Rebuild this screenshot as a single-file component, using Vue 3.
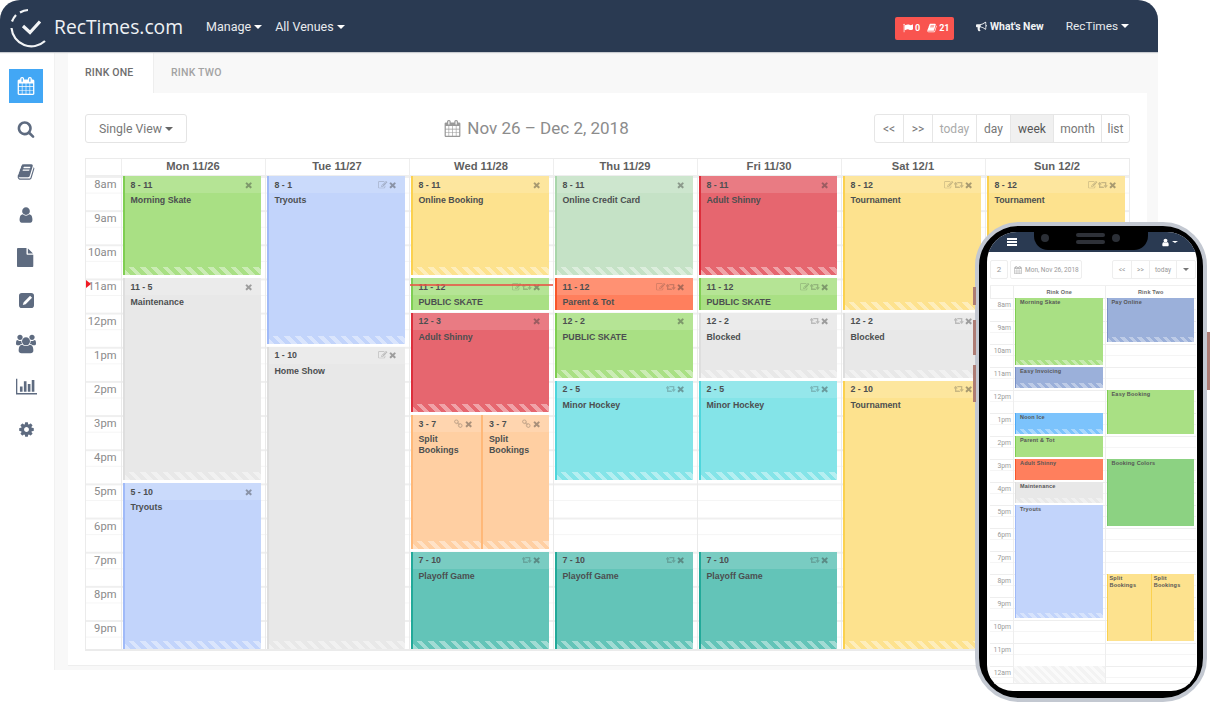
<template>
  <div class="page">
    <div class="window">
      <header class="topbar">
        <svg class="logo" width="50" height="50" viewBox="0 0 50 50">
          <path d="M11.5 27 A20 20 0 0 0 45 40" class="logo-arc" />
          <path d="M12 20.5 A20 20 0 0 1 16 14" class="logo-arc" />
          <path d="M20 11.5 A18 18 0 0 1 28 9" class="logo-arc" />
          <path d="M23 25 L30 31.5 L40 20.5" class="logo-check" />
        </svg>
        <span class="brand">RecTimes.com</span>
        <nav class="nav">
          <a>Manage<i class="caret"></i></a>
          <a>All Venues<i class="caret"></i></a>
        </nav>
        <div class="topright">
          <div class="alerts">
            <svg width="10" height="10" viewBox="0 0 1792 1792"><path :d="icons.flag" /></svg><span>0</span>
            <svg class="alert2" width="10" height="10" viewBox="0 0 1792 1792"><path :d="icons.book" /></svg><span>21</span>
          </div>
          <a class="news">
            <svg width="11" height="11" viewBox="0 0 1792 1792"><path :d="icons.bullhorn" /></svg>What's New
          </a>
          <a class="account">RecTimes<i class="caret"></i></a>
        </div>
      </header>

      <div class="main">
        <aside class="sidebar">
          <div v-for="(s, n) in sideIcons" :key="n" class="side-item" :class="{ active: n === 0 }">
            <svg :width="s.w" :height="s.w" :viewBox="s.box"><path :d="s.d" /></svg>
          </div>
        </aside>

        <section class="content">
          <div class="tabs">
            <div class="tab on">RINK ONE</div>
            <div class="tab">RINK TWO</div>
          </div>
          <div class="panel">
            <div class="toolbar">
              <button class="view-btn">Single View<i class="caret dark"></i></button>
              <h2 class="range">
                <svg width="17" height="17" viewBox="0 0 1792 1792"><path :d="icons.calendar" /></svg>
                Nov 26 – Dec 2, 2018
              </h2>
              <div class="btn-group">
                <span v-for="b in viewBtns" :key="b" :class="{ cur: b === 'week', off: b === 'today' }">{{ b }}</span>
              </div>
            </div>

            <div class="calendar">
              <div class="cal-head">
                <div class="cal-gutter"></div>
                <div v-for="d in days" :key="d.label" class="cal-day">{{ d.label }}</div>
              </div>
              <div class="cal-body">
                <div class="time-col">
                  <i class="now-arrow"></i>
                  <div v-for="t in hours" :key="t" class="time">{{ t }}</div>
                </div>
                <div v-for="(d, n) in days" :key="d.label" class="day">
                  <i v-if="n === 2" class="now-line"></i>
                  <div
                    v-for="(e, k) in d.events"
                    :key="k"
                    class="event"
                    :class="[e.c, e.side, { striped: e.e - e.s > 1 }]"
                    :style="{ gridRow: `${e.s - 7} / ${e.e - 7}` }"
                  >
                    <div class="event-head">
                      <span>{{ e.time }}</span>
                      <span class="event-icons">
                        <svg v-for="ic in e.i" :key="ic" :class="'ic-' + ic" width="10" height="10" viewBox="0 0 1920 1792"><path :d="icons[ic]" /></svg>
                      </span>
                    </div>
                    <div class="event-title">{{ e.title }}</div>
                  </div>
                </div>
              </div>
            </div>
          </div>
        </section>
      </div>
    </div>

    <div class="phone">
      <i class="side-btn l1"></i><i class="side-btn l2"></i><i class="side-btn l3"></i><i class="side-btn r1"></i>
      <div class="notch">
        <i class="cam"></i>
        <div class="speaker"><i></i><i></i></div>
        <i class="cam"></i>
      </div>
      <div class="screen">
        <div class="p-bar">
          <div class="burger"><i></i><i></i><i></i></div>
          <div class="p-user">
            <svg width="9" height="9" viewBox="0 0 1792 1792"><path :d="icons.user" /></svg><i class="caret small"></i>
          </div>
        </div>
        <div class="p-tools">
          <span class="p-box num">2</span>
          <span class="p-box date">
            <svg width="8" height="8" viewBox="0 0 1792 1792"><path :d="icons.calendar" /></svg>Mon, Nov 26, 2018
          </span>
          <div class="p-group">
            <span>&lt;&lt;</span><span>&gt;&gt;</span><span>today</span><span><i class="caret small grey"></i></span>
          </div>
        </div>
        <div class="p-cal">
          <div class="p-head">
            <div></div>
            <div>Rink One</div>
            <div>Rink Two</div>
          </div>
          <div class="p-body">
            <div class="p-times">
              <div v-for="t in phoneHours" :key="t">{{ t }}</div>
            </div>
            <div v-for="(col, n) in phoneCols" :key="n" class="p-col">
              <div
                v-for="(e, k) in col"
                :key="k"
                class="p-event"
                :class="[e.c, e.side, { striped: e.stripe }]"
                :style="{ gridRow: `${e.s - 7} / ${e.e - 7}` }"
              >
                {{ e.title }}
              </div>
              <div v-if="n === 0" class="p-closed"></div>
            </div>
          </div>
        </div>
      </div>
    </div>
  </div>
</template>

<script setup>
const icons = {
  times: "M1490 1322q0 40-28 68l-136 136q-28 28-68 28t-68-28l-294-294-294 294q-28 28-68 28t-68-28l-136-136q-28-28-28-68t28-68l294-294-294-294q-28-28-28-68t28-68l136-136q28-28 68-28t68 28l294 294 294-294q28-28 68-28t68 28l136 136q28 28 28 68t-28 68l-294 294 294 294q28 28 28 68z",
  edit: "M888 1184l116-116-152-152-116 116v56h96v96h56zm440-720q-16-16-33 1l-350 350q-17 17-1 33t33-1l350-350q17-17 1-33zm80 594v190q0 119-84.5 203.5t-203.5 84.5h-832q-119 0-203.5-84.5t-84.5-203.5v-832q0-119 84.5-203.5t203.5-84.5h832q63 0 117 25 15 7 18 23 3 17-9 29l-49 49q-14 14-32 8-23-6-45-6h-832q-66 0-113 47t-47 113v832q0 66 47 113t113 47h832q66 0 113-47t47-113v-126q0-13 9-22l64-64q15-15 35-7t20 29zm-96-738l288 288-672 672h-288v-288zm444 132l-92 92-288-288 92-92q28-28 68-28t68 28l152 152q28 28 28 68t-28 68z",
  retweet: "M1216 1424q0 13-9.5 22.5t-22.5 9.5h-960q-8 0-13.5-2t-9-7-5.5-8-3-11.5-1-11.5v-600h-192q-26 0-45-19t-19-45q0-24 15-41l320-384q19-22 49-22t49 22l320 384q15 17 15 41 0 26-19 45t-45 19h-192v384h576q16 0 25 11l160 192q7 10 7 21zm640-416q0 24-15 41l-320 384q-20 23-49 23t-49-23l-320-384q-15-17-15-41 0-26 19-45t45-19h192v-384h-576q-16 0-25-12l-160-192q-7-9-7-20 0-13 9.5-22.5t22.5-9.5h960q8 0 13.5 2t9 7 5.5 8 3 11.5 1 11.5v600h192q26 0 45 19t19 45z",
  link: "M1456 1216q0-40-28-68l-208-208q-28-28-68-28-42 0-72 32 3 3 19 18.5t21.5 21.5 15 19 13 25.5 3.5 27.5q0 40-28 68t-68 28q-15 0-27.5-3.5t-25.5-13-19-15-21.5-21.5-18.5-19q-33 31-33 73 0 40 28 68l206 207q27 27 68 27 40 0 68-26l147-146q28-28 28-67zm-703-705q0-40-28-68l-206-207q-28-28-68-28-39 0-68 27l-147 146q-28 28-28 67 0 40 28 68l208 208q27 27 68 27 42 0 72-31-3-3-19-18.5t-21.5-21.5-15-19-13-25.5-3.5-27.5q0-40 28-68t68-28q15 0 27.5 3.5t25.5 13 19 15 21.5 21.5 18.5 19q33-31 33-73zm895 705q0 120-85 203l-147 146q-83 83-203 83-121 0-204-85l-206-207q-83-83-83-203 0-123 88-209l-88-88q-86 88-208 88-120 0-204-84l-208-208q-84-84-84-204t85-203l147-146q83-83 203-83 121 0 204 85l206 207q83 83 83 203 0 123-88 209l88 88q86-88 208-88 120 0 204 84l208 208q84 84 84 204z",
  calendar: "M192 1664h288v-288h-288v288zm352 0h320v-288h-320v288zm-352-352h288v-320h-288v320zm352 0h320v-320h-320v320zm-352-384h288v-288h-288v288zm736 736h320v-288h-320v288zm-384-736h320v-288h-320v288zm768 736h288v-288h-288v288zm-384-352h320v-320h-320v320zm-352-864v-288q0-13-9.5-22.5t-22.5-9.5h-64q-13 0-22.5 9.5t-9.5 22.5v288q0 13 9.5 22.5t22.5 9.5h64q13 0 22.5-9.5t9.5-22.5zm736 864h288v-320h-288v320zm-384-384h320v-288h-320v288zm384 0h288v-288h-288v288zm32-480v-288q0-13-9.5-22.5t-22.5-9.5h-64q-13 0-22.5 9.5t-9.5 22.5v288q0 13 9.5 22.5t22.5 9.5h64q13 0 22.5-9.5t9.5-22.5zm384-64v1280q0 52-38 90t-90 38h-1408q-52 0-90-38t-38-90v-1280q0-52 38-90t90-38h128v-96q0-66 47-113t113-47h64q66 0 113 47t47 113v96h384v-96q0-66 47-113t113-47h64q66 0 113 47t47 113v96h128q52 0 90 38t38 90z",
  book: "M1703 478q40 57 18 129l-275 906q-19 64-76.5 107.5t-122.5 43.5h-923q-77 0-148.5-53.5t-99.5-131.5q-24-67-2-127 0-4 3-27t4-37q1-8-3-21.5t-3-19.5q2-11 8-21t16.5-23.5 16.5-23.5q23-38 45-91.5t30-91.5q3-10 .5-30t-.5-28q3-11 17-28t17-23q21-36 42-92t25-90q1-9-2.5-32t.5-28q4-13 22-30.5t22-22.5q19-26 42.5-84.5t27.5-96.5q1-8-3-25.5t-2-26.5q2-8 9-18t18-23 17-21q8-12 16.5-30.5t15-35 16-36 19.5-32 26.5-23.5 36-11.5 47.5 5.5l-1 3q38-9 51-9h761q74 0 114 56t18 130l-274 906q-36 119-71.5 153.5t-128.5 34.5h-869q-27 0-38 15-11 16-1 43 24 70 144 70h923q29 0 56-15.5t35-41.5l300-987q7-22 5-57 38 15 59 43zm-1064 2q-4 13 2 22.5t20 9.5h608q13 0 25.5-9.5t16.5-22.5l21-64q4-13-2-22.5t-20-9.5h-608q-13 0-25.5 9.5t-16.5 22.5zm-83 256q-4 13 2 22.5t20 9.5h608q13 0 25.5-9.5t16.5-22.5l21-64q4-13-2-22.5t-20-9.5h-608q-13 0-25.5 9.5t-16.5 22.5z",
  user: "M1536 1399q0 109-62.5 187t-150.5 78h-854q-88 0-150.5-78t-62.5-187q0-85 8.5-160.5t31.5-152 58.5-131 94-89 134.5-34.5q131 128 313 128t313-128q76 0 134.5 34.5t94 89 58.5 131 31.5 152 8.5 160.5zm-256-887q0 159-112.5 271.5t-271.5 112.5-271.5-112.5-112.5-271.5 112.5-271.5 271.5-112.5 271.5 112.5 112.5 271.5z",
  flag: "M320 256q0 72-64 110v1266q0 13-9.5 22.5t-22.5 9.5h-64q-13 0-22.5-9.5t-9.5-22.5v-1266q-64-38-64-110 0-53 37.5-90.5t90.5-37.5 90.5 37.5 37.5 90.5zm1472 64v763q0 25-12.5 38.5t-39.5 27.5q-215 116-369 116-61 0-123.5-22t-108.5-48-115.5-48-142.5-22q-192 0-464 146-17 9-33 9-26 0-45-19t-19-45v-742q0-32 31-55 21-14 79-43 236-120 421-120 107 0 200 29t219 88q38 19 88 19 54 0 117.5-21t110-47 88-47 54.5-21q26 0 45 19t19 45z",
  bullhorn: "M1664 640q53 0 90.5 37.5t37.5 90.5-37.5 90.5-90.5 37.5v384q0 52-38 90t-90 38q-417-347-812-380-58 19-91 66t-31 100.5 40 92.5q-20 33-23 65.5t6 58 33.5 55 48 50 61.5 50.5q-29 58-111.5 83t-168.5 11.5-132-55.5q-7-23-29.5-87.5t-32-94.5-23-89-15-101 3.5-98.5 22-110.5h-122q-66 0-113-47t-47-113v-192q0-66 47-113t113-47h480q435 0 896-384 52 0 90 38t38 90v384zm-128 604v-954q-394 302-768 343v270q377 42 768 341z",
};

const box = "0 0 1792 1792";
const sideIcons = [
  { w: 18, box, d: icons.calendar },
  { w: 18, box, d: "M1216 832q0-185-131.5-316.5t-316.5-131.5-316.5 131.5-131.5 316.5 131.5 316.5 316.5 131.5 316.5-131.5 131.5-316.5zm512 832q0 52-38 90t-90 38q-54 0-90-38l-343-342q-179 124-399 124-143 0-273.5-55.5t-225-150-150-225-55.5-273.5 55.5-273.5 150-225 225-150 273.5-55.5 273.5 55.5 225 150 150 225 55.5 273.5q0 220-124 399l343 343q37 37 37 90z" },
  { w: 18, box, d: icons.book },
  { w: 18, box, d: icons.user },
  { w: 19, box, d: "M1024 512v-472q22 14 36 28l408 408q14 14 28 36h-472zm-128 32q0 40 28 68t68 28h544v1056q0 40-28 68t-68 28h-1344q-40 0-68-28t-28-68v-1600q0-40 28-68t68-28h800v544z" },
  { w: 15, box: "0 0 16 16", d: "M3 0h10a3 3 0 0 1 3 3v10a3 3 0 0 1-3 3H3a3 3 0 0 1-3-3V3a3 3 0 0 1 3-3zm8.8 3L5 9.8 4 12.9l3.1-1L13.9 5.1z" },
  { w: 20, box: "0 0 1920 1792", d: "M593 896q-162 5-265 128h-134q-82 0-138-40.5t-56-118.5q0-353 124-353 6 0 43.5 21t97.5 42.5 119 21.5q67 0 133-23-5 37-5 66 0 139 81 256zm1071 637q0 120-73 189.5t-194 69.5h-874q-121 0-194-69.5t-73-189.5q0-53 3.5-103.5t14-109 26.5-108.5 43-97.5 62-81 85.5-53.5 111.5-20q10 0 43 21.5t73 48 107 48 135 21.5 135-21.5 107-48 73-48 43-21.5q61 0 111.5 20t85.5 53.5 62 81 43 97.5 26.5 108.5 14 109 3.5 103.5zm-1024-1277q0 106-75 181t-181 75-181-75-75-181 75-181 181-75 181 75 75 181zm704 384q0 159-112.5 271.5t-271.5 112.5-271.5-112.5-112.5-271.5 112.5-271.5 271.5-112.5 271.5 112.5 112.5 271.5zm576 225q0 78-56 118.5t-138 40.5h-134q-103-123-265-128 81-117 81-256 0-29-5-66 66 23 133 23 59 0 119-21.5t97.5-42.5 43.5-21q124 0 124 353zm-128-609q0 106-75 181t-181 75-181-75-75-181 75-181 181-75 181 75 75 181z" },
  { w: 21, box: "0 0 2048 1792", d: "M640 896v512h-256v-512h256zm384-512v1024h-256v-1024h256zm1024 1152v128h-2048v-1536h128v1408h1920zm-640-896v768h-256v-768h256zm384-384v1152h-256v-1152h256z" },
  { w: 17, box, d: "M1152 896q0-106-75-181t-181-75-181 75-75 181 75 181 181 75 181-75 75-181zm512-109v222q0 12-8 23t-20 13l-185 28q-19 54-39 91 35 50 107 138 10 12 10 25t-9 23q-27 37-99 108t-94 71q-12 0-26-9l-138-108q-44 23-91 38-16 136-29 186-7 28-36 28h-222q-14 0-24.5-8.5t-11.5-21.5l-28-184q-49-16-90-37l-141 107q-10 9-25 9-14 0-25-11-126-114-165-168-7-10-7-23 0-12 8-23 15-21 51-66.5t54-70.5q-27-50-41-99l-183-27q-13-2-21-12.5t-8-23.5v-222q0-12 8-23t19-13l186-28q14-46 39-92-40-57-107-138-10-12-10-24 0-10 9-23 26-36 98.5-107.5t94.5-71.5q13 0 26 10l138 107q44-23 91-38 16-136 29-186 7-28 36-28h222q14 0 24.5 8.5t11.5 21.5l28 184q49 16 90 37l142-107q9-9 24-9 13 0 25 10 129 119 165 170 7 8 7 22 0 12-8 23-15 21-51 66.5t-54 70.5q26 50 41 98l183 28q13 2 21 12.5t8 23.5z" },
];

const viewBtns = ["<<", ">>", "today", "day", "week", "month", "list"];
const hours = ["8am", "9am", "10am", "11am", "12pm", "1pm", "2pm", "3pm", "4pm", "5pm", "6pm", "7pm", "8pm", "9pm"];
const phoneHours = [...hours, "10pm", "11pm", "12am"];

const x = ["times"];
const ex = ["edit", "times"];
const rx = ["retweet", "times"];
const erx = ["edit", "retweet", "times"];
const lx = ["link", "times"];

const playoff = { s: 19, e: 22, c: "teal", time: "7 - 10", title: "Playoff Game", i: rx };
const hockey = { s: 14, e: 17, c: "cyan", time: "2 - 5", title: "Minor Hockey", i: rx };
const skate = { s: 11, e: 12, c: "green", time: "11 - 12", title: "PUBLIC SKATE", i: erx };
const tournament = { s: 8, e: 12, c: "yellow", time: "8 - 12", title: "Tournament", i: erx };

const days = [
  {
    label: "Mon 11/26",
    events: [
      { s: 8, e: 11, c: "green", time: "8 - 11", title: "Morning Skate", i: x },
      { s: 11, e: 17, c: "grey", time: "11 - 5", title: "Maintenance", i: x },
      { s: 17, e: 22, c: "blue", time: "5 - 10", title: "Tryouts", i: x },
    ],
  },
  {
    label: "Tue 11/27",
    events: [
      { s: 8, e: 13, c: "blue", time: "8 - 1", title: "Tryouts", i: ex },
      { s: 13, e: 22, c: "grey", time: "1 - 10", title: "Home Show", i: ex },
    ],
  },
  {
    label: "Wed 11/28",
    events: [
      { s: 8, e: 11, c: "yellow", time: "8 - 11", title: "Online Booking", i: x },
      skate,
      { s: 12, e: 15, c: "red", time: "12 - 3", title: "Adult Shinny", i: x },
      { s: 15, e: 19, c: "peach", side: "left", time: "3 - 7", title: "Split Bookings", i: lx },
      { s: 15, e: 19, c: "peach", side: "right", time: "3 - 7", title: "Split Bookings", i: lx },
      playoff,
    ],
  },
  {
    label: "Thu 11/29",
    events: [
      { s: 8, e: 11, c: "sage", time: "8 - 11", title: "Online Credit Card", i: x },
      { s: 11, e: 12, c: "coral", time: "11 - 12", title: "Parent & Tot", i: erx },
      { s: 12, e: 14, c: "green", time: "12 - 2", title: "PUBLIC SKATE", i: x },
      hockey,
      playoff,
    ],
  },
  {
    label: "Fri 11/30",
    events: [
      { s: 8, e: 11, c: "red", time: "8 - 11", title: "Adult Shinny", i: x },
      skate,
      { s: 12, e: 14, c: "grey", time: "12 - 2", title: "Blocked", i: rx },
      hockey,
      playoff,
    ],
  },
  {
    label: "Sat 12/1",
    events: [
      tournament,
      { s: 12, e: 14, c: "grey", time: "12 - 2", title: "Blocked", i: rx },
      { s: 14, e: 22, c: "yellow", time: "2 - 10", title: "Tournament", i: rx },
    ],
  },
  // the rest of Sunday sits behind the phone
  { label: "Sun 12/2", events: [tournament] },
];

const phoneCols = [
  [
    { s: 8, e: 11, c: "green", title: "Morning Skate", stripe: true },
    { s: 11, e: 12, c: "slate", title: "Easy Invoicing", stripe: true },
    { s: 13, e: 14, c: "sky", title: "Noon Ice", stripe: true },
    { s: 14, e: 15, c: "green", title: "Parent & Tot" },
    { s: 15, e: 16, c: "coral", title: "Adult Shinny" },
    { s: 16, e: 17, c: "grey", title: "Maintenance", stripe: true },
    { s: 17, e: 22, c: "blue", title: "Tryouts", stripe: true },
  ],
  [
    { s: 8, e: 10, c: "slate", title: "Pay Online", stripe: true },
    { s: 12, e: 14, c: "green", title: "Easy Booking" },
    { s: 15, e: 18, c: "leaf", title: "Booking Colors" },
    { s: 20, e: 23, c: "yellow", side: "left", title: "Split Bookings" },
    { s: 20, e: 23, c: "yellow", side: "right", title: "Split Bookings" },
  ],
];
</script>

<style>
html,
body {
  margin: 0;
  background: #fff;
}
</style>

<style scoped>
.page {
  position: relative;
  width: 1210px;
  height: 703px;
  overflow: hidden;
  font-family: Roboto, "Liberation Sans", sans-serif;
  color: #666;
}
.window {
  width: 1158px;
  height: 670px;
  display: flex;
  flex-direction: column;
  border-radius: 20px 20px 0 20px;
  overflow: hidden;
}
.topbar {
  height: 52px;
  flex: none;
  display: flex;
  align-items: center;
  background: #2a3a52;
  color: #fff;
  box-shadow: 0 1px 1px #c9ccd1;
  position: relative;
}
.logo {
  fill: none;
  stroke: #f2f4f6;
}
.logo-arc {
  stroke-width: 2.2;
}
.logo-check {
  stroke-width: 3.2;
}
.brand {
  margin-left: 4px;
  font-family: "Open Sans", sans-serif;
  font-size: 19.3px;
  color: #eef1f4;
}
.nav {
  display: flex;
  gap: 13px;
  margin-left: 23px;
  font-size: 12.5px;
  color: #e8ebee;
}
.caret {
  display: inline-block;
  margin-left: 3px;
  vertical-align: 2px;
  border-top: 4px solid #fff;
  border-left: 4px solid transparent;
  border-right: 4px solid transparent;
}
.caret.dark {
  border-top-color: #666;
}
.caret.small {
  margin-left: 2px;
  vertical-align: 1px;
  border-width: 2.5px 3px 0;
}
.caret.grey {
  margin: 0;
  border-top-color: #777;
  border-width: 3px 3.5px 0;
}
.topright {
  margin-left: auto;
  display: flex;
  align-items: center;
  padding-right: 29px;
}
.alerts {
  width: 59px;
  height: 23px;
  margin-top: 4px;
  box-sizing: border-box;
  display: flex;
  align-items: center;
  gap: 2px;
  padding-left: 8px;
  background: #f9544f;
  border-radius: 2px;
  font-size: 9px;
  font-weight: 700;
}
.alerts svg {
  fill: #fff;
}
.alert2 {
  margin-left: 5px;
}
.news {
  margin-left: 22px;
  font-size: 10.4px;
  font-weight: 700;
  color: #f1f3f5;
  display: flex;
  align-items: center;
  gap: 3px;
}
.news svg {
  fill: #f1f3f5;
}
.account {
  margin-left: 22px;
  font-size: 11.8px;
  color: #e8ebee;
}

.main {
  flex: 1;
  min-height: 0;
  display: flex;
}
.sidebar {
  width: 55px;
  flex: none;
  box-sizing: border-box;
  padding: 12px 0 0 9px;
  background: #fff;
  border-right: 1px solid #f1f1f1;
}
.side-item {
  width: 34px;
  height: 43px;
  display: flex;
  align-items: center;
  justify-content: center;
  fill: #5e6b80;
}
.side-item.active {
  height: 34px;
  margin: 5px 0 4px;
  background: #42a7f5;
  fill: #fff;
}
.content {
  flex: 1;
  min-width: 0;
  display: flex;
  flex-direction: column;
  padding: 0 11px 4px 13px;
  background: #f8f8f8;
}
.tabs {
  height: 41px;
  flex: none;
  display: flex;
}
.tab {
  width: 70px;
  display: flex;
  align-items: center;
  padding-left: 17px;
  font-size: 10.5px;
  font-weight: 500;
  letter-spacing: 0.2px;
  color: #a3a3a3;
}
.tab.on {
  width: 68px;
  background: #fff;
  color: #6e6e6e;
  border-right: 1px solid #eee;
}
.panel {
  flex: 1;
  min-height: 0;
  box-sizing: border-box;
  padding: 21px 17px 0 17px;
  background: #fff;
  border-bottom: 1px solid #eee;
}
.toolbar {
  height: 29px;
  display: flex;
  align-items: center;
  justify-content: space-between;
}
.view-btn {
  width: 102px;
  height: 29px;
  padding: 0;
  background: #fff;
  border: 1px solid #e4e4e4;
  border-radius: 3px;
  font: 12.3px Roboto, sans-serif;
  color: #777;
}
.range {
  margin: -1px 0 0 12px;
  display: flex;
  align-items: center;
  gap: 6px;
  font-size: 17px;
  font-weight: 400;
  color: #8c8c8c;
}
.range svg {
  fill: #999;
}
.btn-group {
  display: grid;
  grid-template-columns: 28px 29px 44px 34px 43px 48px 28px;
  height: 29px;
  box-sizing: border-box;
  border: 1px solid #e6e6e6;
  border-radius: 3px;
  font-size: 12px;
  color: #777;
}
.btn-group span {
  display: flex;
  align-items: center;
  justify-content: center;
  border-left: 1px solid #e6e6e6;
}
.btn-group span:first-child {
  border-left: 0;
}
.btn-group .off {
  color: #aaa;
}
.btn-group .cur {
  background: #f0f0f0;
  color: #555;
}

.calendar {
  margin-top: 15px;
  width: 1045px;
  border: solid #ebebeb;
  border-width: 1px 1px 2px 1px;
  box-sizing: border-box;
}
.cal-head {
  display: grid;
  grid-template-columns: 34.5px repeat(7, 144px);
  height: 17px;
  box-sizing: border-box;
  border-bottom: 1px solid #eee;
}
.cal-day {
  text-align: center;
  font: 700 11.2px/15px "Liberation Sans", sans-serif;
  color: #5f5f5f;
  border-left: 1px solid #eee;
}
.cal-body {
  display: grid;
  grid-template-columns: 34.5px repeat(7, 144px);
  height: 473px;
  overflow: hidden;
}
.time-col,
.day {
  position: relative;
  background-image: linear-gradient(#efefef 0 2px, transparent 2px 17px, #f5f5f5 17px 18px, transparent 18px);
  background-size: 100% 34.17px;
  border-left: 1px solid #eaeaea;
}
.time-col {
  border-left: 0;
}
.time {
  height: 34.17px;
  box-sizing: border-box;
  padding: 1px 4px 0 0;
  text-align: right;
  font-size: 11.2px;
  line-height: 16px;
  color: #8a8a8a;
}
.now-arrow {
  position: absolute;
  left: 0;
  top: 104px;
  border-left: 5px solid #f01a24;
  border-top: 4px solid transparent;
  border-bottom: 4px solid transparent;
}
.now-line {
  position: absolute;
  z-index: 3;
  left: 0;
  right: 0;
  top: 108px;
  height: 2px;
  background: rgba(233, 84, 70, 0.8);
}
.day {
  display: grid;
  grid-template-rows: repeat(13, 34.17px) 32px;
  grid-template-columns: 1fr 1fr;
}
.event {
  grid-column: 1 / 3;
  position: relative;
  margin: 0 4px 3px 1px;
  min-width: 0;
  overflow: hidden;
  border-left: 2px solid var(--edge);
  background: var(--fill);
  font-family: "Liberation Sans", sans-serif;
  font-weight: 700;
  font-size: 8.8px;
  color: #4c4f50;
}
.event.left {
  grid-column: 1 / 2;
  margin-right: 0;
}
.event.right {
  grid-column: 2 / 3;
  margin-left: 0;
}
.event-head {
  height: 17px;
  box-sizing: border-box;
  padding: 0 7px 0 6px;
  display: flex;
  align-items: center;
  justify-content: space-between;
  background: rgba(255, 255, 255, 0.14);
}
.event-icons {
  display: flex;
  align-items: center;
  fill: rgba(50, 50, 50, 0.42);
}
.event-icons .ic-edit,
.event-icons .ic-link,
.event-icons .ic-retweet {
  fill: rgba(50, 50, 50, 0.26);
}
.event-title {
  padding: 2px 6px 0;
  line-height: 11px;
}
.striped::after {
  content: "";
  position: absolute;
  left: 0;
  right: 0;
  bottom: 0;
  height: 8px;
  background: repeating-linear-gradient(45deg, rgba(255, 255, 255, 0.4) 0 4px, transparent 4px 8px);
}
.green { --fill: #a9e084; --edge: #7fce52; }
.blue { --fill: #c2d4fb; --edge: #a0baf8; }
.grey { --fill: #e8e8e8; --edge: #dedede; }
.yellow { --fill: #fde28e; --edge: #fbd14f; }
.red { --fill: #e6666f; --edge: #dc2e3b; }
.sage { --fill: #c5e2c6; --edge: #a9d6ab; }
.coral { --fill: #ff7f5d; --edge: #f8562a; }
.cyan { --fill: #84e4e8; --edge: #4ed6dc; }
.peach { --fill: #ffcfa2; --edge: #ffb878; }
.teal { --fill: #63c4b8; --edge: #22a999; }
.slate { --fill: #9bb0da; --edge: #7890c6; }
.sky { --fill: #7cc3fc; --edge: #4eaaf6; }
.leaf { --fill: #8cd282; --edge: #78c86c; }

.phone {
  position: absolute;
  left: 975px;
  top: 222px;
  width: 232px;
  height: 480px;
  box-sizing: border-box;
  padding: 6px 6px 7px 8px;
  background: #000;
  border: 4px solid #c3c8d1;
  border-radius: 44px;
}
.side-btn {
  position: absolute;
  width: 3px;
  background: #ad7c74;
}
.side-btn.l1 { left: -6px; top: 61px; height: 18px; }
.side-btn.l2 { left: -6px; top: 94px; height: 35px; }
.side-btn.l3 { left: -6px; top: 139px; height: 37px; }
.side-btn.r1 { right: -7px; top: 106px; height: 58px; }
.notch {
  position: absolute;
  z-index: 2;
  top: 0;
  left: 55px;
  width: 114px;
  height: 24px;
  box-sizing: border-box;
  padding: 0 0 0 7px;
  display: flex;
  align-items: center;
  background: #000;
  border-radius: 0 0 14px 14px;
}
.cam {
  width: 8px;
  height: 8px;
  border-radius: 50%;
  background: #2b2f36;
}
.speaker {
  margin: 0 7px 0 27px;
  display: flex;
  flex-direction: column;
  gap: 3px;
}
.speaker i {
  display: block;
  width: 29px;
  height: 4px;
  border-radius: 2px;
  background: #2e3138;
}
.screen {
  height: 100%;
  overflow: hidden;
  background: #fff;
  border-radius: 30px 30px 26px 26px;
}
.p-bar {
  height: 20px;
  box-sizing: border-box;
  padding: 0 19px 0 20px;
  display: flex;
  align-items: center;
  justify-content: space-between;
  background: #2a3a52;
}
.burger i {
  display: block;
  width: 10px;
  height: 1.5px;
  margin: 1.5px 0;
  background: #fff;
}
.p-user {
  display: flex;
  align-items: center;
  fill: #fff;
}
.p-tools {
  margin-top: 8px;
  padding: 0 1px 0 3px;
  display: flex;
  gap: 2px;
  height: 19px;
  font-size: 6.5px;
  color: #999;
  white-space: nowrap;
}
.p-box {
  box-sizing: border-box;
  border: 1px solid #eee;
  border-radius: 2px;
  display: flex;
  align-items: center;
}
.p-box.num {
  width: 18px;
  justify-content: center;
  font-size: 8px;
}
.p-box.date {
  width: 72px;
  gap: 3px;
  padding-left: 3px;
  fill: #aaa;
}
.p-group {
  margin-left: auto;
  width: 84px;
  box-sizing: border-box;
  display: grid;
  grid-template-columns: 18px 18px 27px 1fr;
  border: 1px solid #eee;
  border-radius: 2px;
}
.p-group span {
  display: flex;
  align-items: center;
  justify-content: center;
  border-left: 1px solid #eee;
}
.p-group span:first-child {
  border-left: 0;
}
.p-cal {
  margin: 6px 1px 0 3px;
  border-top: 1px solid #f0f0f0;
}
.p-head {
  display: grid;
  grid-template-columns: 23px 1fr 1fr;
  height: 12px;
  font: 700 5.5px/12px "Liberation Sans", sans-serif;
  letter-spacing: 0.2px;
  color: #666;
  text-align: center;
}
.p-head div {
  border-left: 1px solid #eee;
}
.p-body {
  display: grid;
  grid-template-columns: 23px 1fr 1fr;
  height: 385px;
  overflow: hidden;
  border-bottom: 1px solid #eee;
}
.p-times,
.p-col {
  background-image: linear-gradient(#eee 0 1px, transparent 1px 11.5px, #f5f5f5 11.5px 12.5px, transparent 12.5px);
  background-size: 100% 23px;
}
.p-times div {
  height: 23px;
  box-sizing: border-box;
  padding: 2px 2px 0 0;
  text-align: right;
  font-size: 6.8px;
  line-height: 10px;
  color: #999;
}
.p-col {
  position: relative;
  display: grid;
  grid-template-rows: repeat(17, 23px);
  grid-template-columns: 1fr 1fr;
  border-left: 1px solid #eee;
}
.p-event {
  grid-column: 1 / 3;
  position: relative;
  min-width: 0;
  overflow: hidden;
  margin: 0 2px 2px 1px;
  padding: 1px 3px 0 4px;
  border-left: 1px solid var(--edge);
  background: var(--fill);
  font: 700 5.5px/7px "Liberation Sans", sans-serif;
  letter-spacing: 0.2px;
  color: #555;
}
.p-event.left {
  grid-column: 1 / 2;
  margin-right: 0;
  padding-left: 2px;
}
.p-event.right {
  grid-column: 2 / 3;
  margin-left: 0;
  padding-left: 2px;
}
.p-event.striped::after {
  height: 5px;
  background: repeating-linear-gradient(45deg, rgba(255, 255, 255, 0.35) 0 3px, transparent 3px 6px);
}
.p-closed {
  grid-row: 17;
  grid-column: 1 / 3;
  background: repeating-linear-gradient(45deg, #f3f3f3 0 3px, #fafafa 3px 6px);
}
</style>
